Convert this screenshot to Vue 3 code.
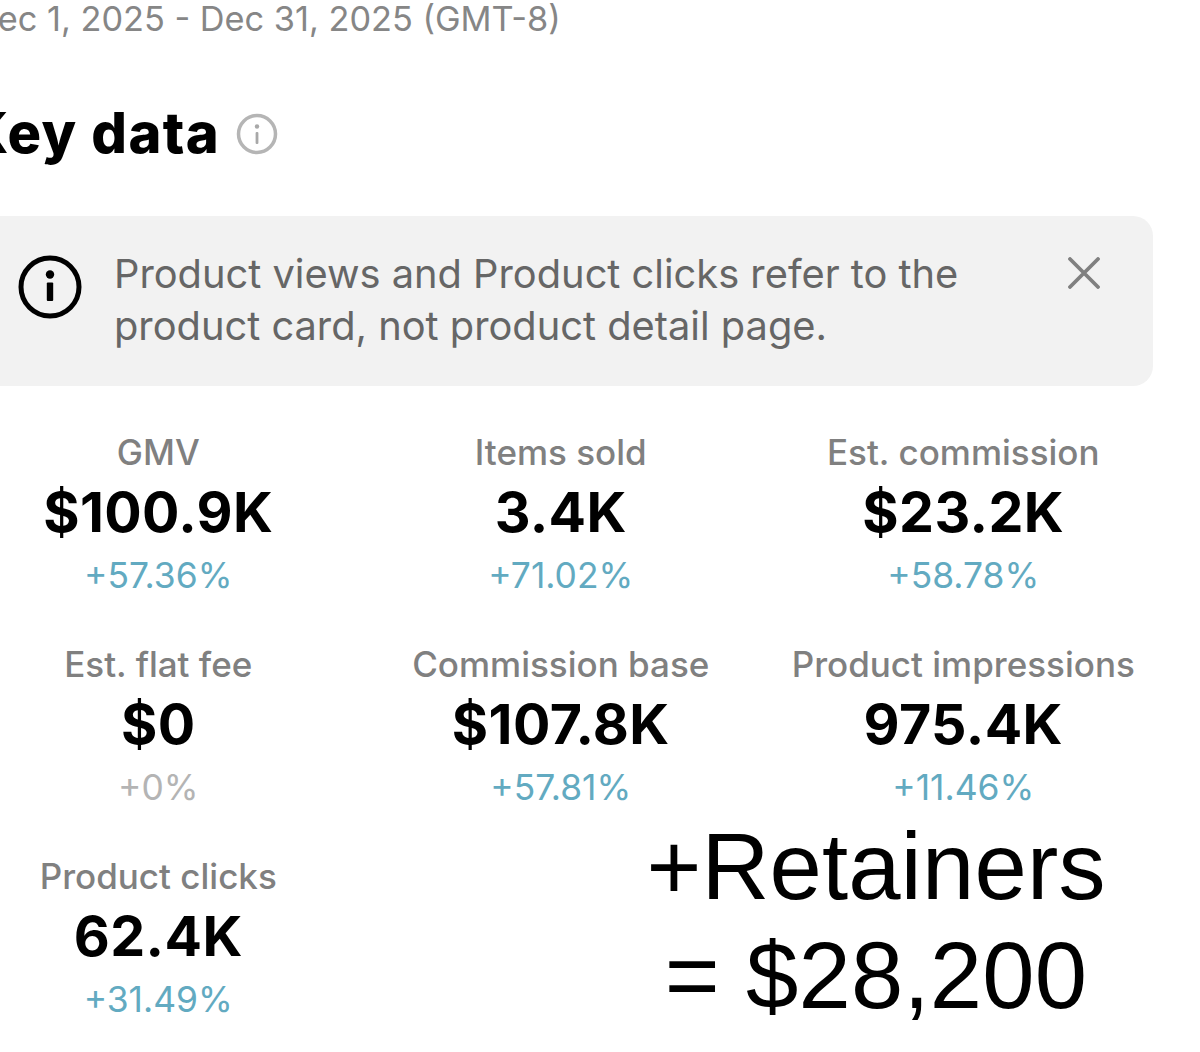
<template>
    <main class="page">
        <p class="date-range">Dec 1, 2025 - Dec 31, 2025 (GMT-8)</p>

        <div class="heading">
            <h1>Key data</h1>
            <svg class="heading-info" viewBox="0 0 42 42" fill="none">
                <circle cx="21" cy="21" r="18.5" stroke="#b5b5b5" stroke-width="3.5" />
                <circle cx="21" cy="13.5" r="2.2" fill="#a8a8a8" />
                <rect x="19.6" y="19" width="2.8" height="12" rx="1" fill="#a8a8a8" />
            </svg>
        </div>

        <div class="notice">
            <svg class="notice-icon" viewBox="0 0 64 64" fill="none">
                <circle cx="32" cy="32" r="29" stroke="#000" stroke-width="5" />
                <circle cx="32" cy="19.5" r="4.2" fill="#000" />
                <rect x="28.8" y="27.5" width="6.4" height="18.5" rx="1" fill="#000" />
            </svg>
            <p>Product views and Product clicks refer to the<br>product card, not product detail page.</p>
            <svg class="notice-close" viewBox="0 0 32 32" fill="none">
                <path d="M2 2 L30 30 M30 2 L2 30" stroke="#808080" stroke-width="3.8" stroke-linecap="round" />
            </svg>
        </div>

        <div class="metrics">
            <div v-for="metric in metrics" :key="metric.label" class="metric">
                <span class="metric-label">{{ metric.label }}</span>
                <strong class="metric-value">{{ metric.value }}</strong>
                <span class="metric-delta" :class="{ flat: metric.flat }">{{ metric.delta }}</span>
            </div>
        </div>

        <div class="retainers">+Retainers<br>= $28,200</div>
    </main>
</template>

<script setup>
const metrics = [
    { label: 'GMV', value: '$100.9K', delta: '+57.36%' },
    { label: 'Items sold', value: '3.4K', delta: '+71.02%' },
    { label: 'Est. commission', value: '$23.2K', delta: '+58.78%' },
    { label: 'Est. flat fee', value: '$0', delta: '+0%', flat: true },
    { label: 'Commission base', value: '$107.8K', delta: '+57.81%' },
    { label: 'Product impressions', value: '975.4K', delta: '+11.46%' },
    { label: 'Product clicks', value: '62.4K', delta: '+31.49%' },
]
</script>

<style scoped>
.page {
    position: relative;
    box-sizing: border-box;
    width: 1200px;
    height: 1052px;
    overflow: hidden;
    background: #fff;
    font-family: Inter, "Liberation Sans", sans-serif;
}

.date-range {
    margin: 0 0 0 -27px;
    height: 38px;
    font-size: 34.3px;
    line-height: 38px;
    color: #868686;
    white-space: nowrap;
}

.heading {
    display: flex;
    align-items: center;
    gap: 16px;
    margin: 62px 0 0 -33px;
    height: 66px;
}

.heading h1 {
    margin: 0;
    font-size: 56px;
    line-height: 66px;
    font-weight: 800;
    letter-spacing: 1.4px;
    color: #000;
}

.heading-info {
    width: 42px;
    height: 42px;
    margin-top: 2px;
}

.notice {
    display: flex;
    align-items: flex-start;
    box-sizing: border-box;
    width: 1193px;
    height: 170px;
    margin: 50px 0 0 -40px;
    padding: 32px 52px 0 58px;
    background: #f2f2f2;
    border-radius: 20px;
}

.notice-icon {
    flex: none;
    width: 64px;
    height: 64px;
    margin-top: 7px;
}

.notice p {
    flex: 1;
    margin: 0 0 0 32px;
    font-size: 39.8px;
    line-height: 52px;
    white-space: nowrap;
    color: #666;
}

.notice-close {
    flex: none;
    width: 32px;
    height: 32px;
    margin-top: 9px;
    margin-right: 1px;
}

.metrics {
    display: grid;
    grid-template-columns: repeat(3, 402.5px);
    grid-auto-rows: 212px;
    margin: 47px 0 0 -43px;
}

.metric {
    display: flex;
    flex-direction: column;
    align-items: center;
    white-space: nowrap;
}

.metric-label {
    font-size: 35px;
    line-height: 38px;
    font-weight: 500;
    color: #808080;
}

.metric-value {
    margin-top: 10px;
    font-size: 55.5px;
    line-height: 62px;
    font-weight: 750;
    letter-spacing: 0.4px;
    color: #000;
}

.metric-delta {
    margin-top: 14px;
    font-size: 35.4px;
    line-height: 38px;
    color: #62aac1;
}

.metric-delta.flat {
    color: #b4b4b4;
}

.retainers {
    position: absolute;
    left: 576px;
    top: 812px;
    width: 600px;
    text-align: center;
    font-family: "Liberation Sans", Arial, sans-serif;
    font-size: 94px;
    line-height: 109px;
    letter-spacing: 0.2px;
    color: #000;
}
</style>
